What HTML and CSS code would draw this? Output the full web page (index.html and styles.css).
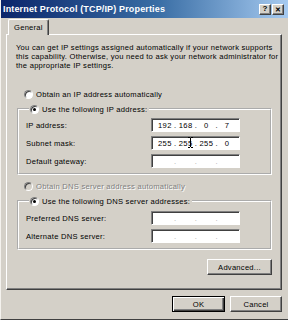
FILE: index.html
```html
<!DOCTYPE html>
<html lang="en">
<head>
    <meta charset="UTF-8">
    <title>Internet Protocol (TCP/IP) Properties</title>
    <link rel="stylesheet" href="styles.css">
</head>
<body>

<div class="window">
    <div class="titlebar">
        <span class="title">Internet Protocol (TCP/IP) Properties</span>
        <span class="caption-btns">
            <span class="cbtn">?</span>
            <span class="cbtn close">&#x2715;</span>
        </span>
    </div>

    <div class="tabs">
        <span class="tab">General</span>
    </div>

    <div class="panel">
        <p class="intro">You can get IP settings assigned automatically if your network supports<br>
            this capability. Otherwise, you need to ask your network administrator for<br>
            the appropriate IP settings.</p>

        <div class="option first">
            <span class="radio"></span>Obtain an IP address automatically
        </div>

        <fieldset class="group ip-group">
            <legend><span class="radio checked"></span>Use the following IP address:</legend>
            <div class="row">
                <span class="label">IP address:</span>
                <span class="ipbox">
                    <span class="seg">192</span><i>.</i>
                    <span class="seg">168</span><i>.</i>
                    <span class="seg">0</span><i>.</i>
                    <span class="seg">7</span>
                </span>
            </div>
            <div class="row">
                <span class="label">Subnet mask:</span>
                <span class="ipbox">
                    <span class="seg">255</span><i>.</i>
                    <span class="seg">255</span><i>.</i>
                    <span class="seg">255</span><i>.</i>
                    <span class="seg">0</span>
                </span>
                <svg class="ibeam" width="5" height="11" viewBox="0 0 5 11">
                    <path d="M0 0.5h2M3 0.5h2M2.5 1v9M0 10.5h2M3 10.5h2" stroke="#000" stroke-width="1" fill="none"/>
                </svg>
            </div>
            <div class="row">
                <span class="label">Default gateway:</span>
                <span class="ipbox empty">
                    <span class="seg"></span><i>.</i>
                    <span class="seg"></span><i>.</i>
                    <span class="seg"></span><i>.</i>
                    <span class="seg"></span>
                </span>
            </div>
        </fieldset>

        <div class="option disabled">
            <span class="radio"></span>Obtain DNS server address automatically
        </div>

        <fieldset class="group dns-group">
            <legend><span class="radio checked"></span>Use the following DNS server addresses:</legend>
            <div class="row">
                <span class="label">Preferred DNS server:</span>
                <span class="ipbox empty">
                    <span class="seg"></span><i>.</i>
                    <span class="seg"></span><i>.</i>
                    <span class="seg"></span><i>.</i>
                    <span class="seg"></span>
                </span>
            </div>
            <div class="row">
                <span class="label">Alternate DNS server:</span>
                <span class="ipbox empty">
                    <span class="seg"></span><i>.</i>
                    <span class="seg"></span><i>.</i>
                    <span class="seg"></span><i>.</i>
                    <span class="seg"></span>
                </span>
            </div>
        </fieldset>

        <div class="advanced-row">
            <button class="btn advanced">Advanced...</button>
        </div>
    </div>

    <div class="footer">
        <button class="btn default">OK</button>
        <button class="btn">Cancel</button>
    </div>
</div>

</body>
</html>
```

FILE: styles.css
```css
* {
    box-sizing: border-box;
}
body {
    margin: 0;
    font-family: "Liberation Sans", Arial, sans-serif;
    font-size: 7.6px;
    letter-spacing: 0.25px;
    color: #000;
    background: #d4d0c8;
}
.window {
    width: 288px;
    height: 320px;
    background: #d4d0c8;
    border-left: 1px solid #f4f2ee;
    border-bottom: 1px solid #404040;
    overflow: hidden;
}
.titlebar {
    height: 18px;
    margin-left: -1px;
    display: flex;
    align-items: center;
    justify-content: space-between;
    padding: 0 4px 0 3px;
    background: linear-gradient(to right, #0a246a, #3a6ea5 55%, #a6caf0);
}
.title {
    color: #fff;
    font-weight: bold;
    font-size: 9px;
    letter-spacing: 0.15px;
}
.caption-btns {
    display: flex;
    gap: 1px;
}
.cbtn {
    width: 12px;
    height: 11px;
    display: flex;
    align-items: center;
    justify-content: center;
    background: #d4d0c8;
    border: 1px solid;
    border-color: #fff #404040 #404040 #fff;
    box-shadow: inset -1px -1px 0 #808080;
    font-weight: bold;
    font-size: 8px;
    letter-spacing: 0;
    line-height: 1;
}
.cbtn.close {
    font-size: 7px;
}
.tabs {
    height: 15px;
    margin-top: 1px;
    padding-left: 7px;
    position: relative;
    z-index: 1;
}
.tab {
    display: inline-block;
    height: 16px;
    padding: 3px 5px 0 5px;
    background: #d4d0c8;
    border: 1px solid;
    border-color: #fff #404040 transparent #fff;
    border-bottom: none;
    box-shadow: inset -1px 0 0 #808080;
    border-radius: 2px 2px 0 0;
}
.panel {
    margin-left: 5px;
    width: 276px;
    height: 256px;
    border: 1px solid;
    border-color: #fff #404040 #404040 #fff;
    box-shadow: inset -1px -1px 0 #808080;
    padding: 0 9px;
}
.intro {
    margin: 8px 0 0;
    line-height: 9px;
    white-space: nowrap;
}
.option {
    display: flex;
    align-items: center;
    height: 10px;
    margin-left: 8px;
}
.option.first {
    margin-top: 19px;
}
.option.disabled {
    margin-top: 6px;
    color: #808080;
    text-shadow: 1px 1px 0 #fff;
}
.radio {
    width: 9px;
    height: 9px;
    margin-right: 3px;
    border-radius: 50%;
    background: #fff;
    border: 1px solid;
    border-color: #808080 #fff #fff #808080;
    box-shadow: inset 1px 1px 0 #404040;
    display: flex;
    align-items: center;
    justify-content: center;
    flex: none;
}
.radio.checked::after {
    content: "";
    width: 3px;
    height: 3px;
    border-radius: 50%;
    background: #000;
}
.disabled .radio {
    background: #d4d0c8;
}
.group {
    margin: 5px 0 0 1px;
    width: 255px;
    border: 2px groove #fff;
    padding: 0 0 0 7px;
}
.group legend {
    display: flex;
    align-items: center;
    height: 10px;
    padding: 0 2px 0 1px;
    margin-left: 3px;
}
.ip-group {
    padding-top: 4px;
    padding-bottom: 5px;
}
.dns-group {
    padding-top: 5px;
    padding-bottom: 5px;
}
.row {
    display: flex;
    align-items: center;
    height: 14px;
    position: relative;
}
.row + .row {
    margin-top: 4px;
}
.label {
    width: 125px;
}
.ipbox {
    width: 89px;
    height: 14px;
    background: #fff;
    border: 1px solid;
    border-color: #808080 #fff #fff #808080;
    box-shadow: inset 1px 1px 0 #404040;
    display: flex;
    align-items: center;
    padding: 1px 3px 0 4px;
    letter-spacing: 0.4px;
}
.seg {
    width: 19px;
    text-align: center;
}
.ipbox i {
    font-style: normal;
    width: 3px;
    text-align: center;
}
.ipbox.empty i {
    color: #aaa;
}
.ibeam {
    position: absolute;
    left: 162px;
    top: 1px;
}
.advanced-row {
    display: flex;
    justify-content: flex-end;
    margin: 9px 0 0;
    width: 256px;
}
.btn {
    font-family: inherit;
    font-size: 7.6px;
    letter-spacing: 0.25px;
    color: #000;
    background: #d4d0c8;
    border: 1px solid;
    border-color: #fff #404040 #404040 #fff;
    box-shadow: inset -1px -1px 0 #808080;
    padding: 0;
    height: 16px;
}
.advanced {
    width: 65px;
}
.footer {
    display: flex;
    justify-content: flex-end;
    gap: 5px;
    margin-top: 6px;
    padding-right: 6px;
}
.footer .btn {
    width: 52px;
}
.btn.default {
    width: 53px;
    border-color: #000;
    box-shadow: inset 1px 1px 0 #fff, inset -1px -1px 0 #404040, inset -2px -2px 0 #808080;
}
```
